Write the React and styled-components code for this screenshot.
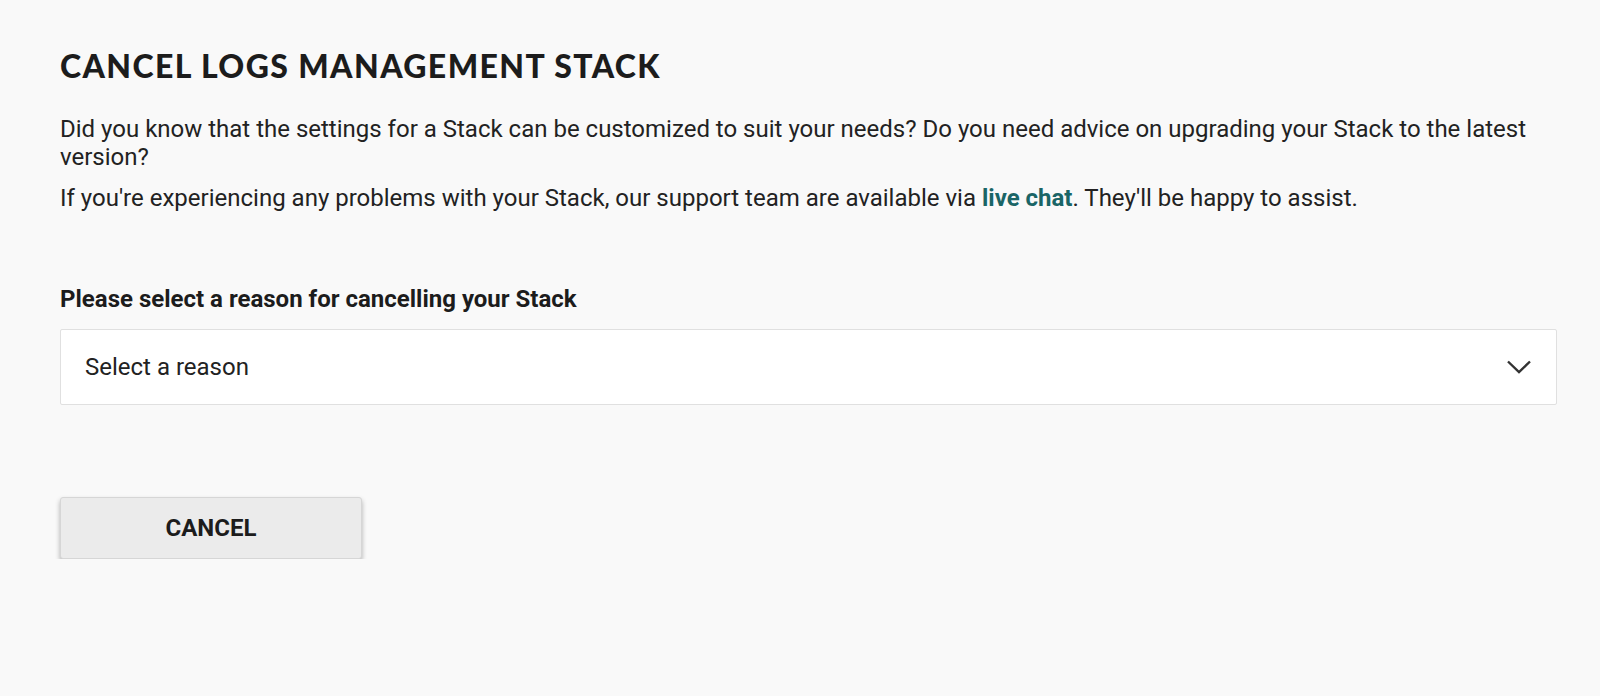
import styled, {createGlobalStyle} from 'styled-components'

const GlobalStyle = createGlobalStyle`
  body {
    margin: 0;
    background: #f9f9f9;
    font-family: Roboto, "Liberation Sans", sans-serif;
    color: #222;
  }
`

const Page = styled.main`
  padding: 46px 43px 0 60px;
`

const Title = styled.h1`
  margin: 0 0 30px;
  font-family: Lato, "Noto Sans", sans-serif;
  font-weight: 900;
  font-size: 32px;
  letter-spacing: 1.4px;
  color: #1c1c1c;
`

const Text = styled.p`
  margin: 0 0 13px;
  font-size: 24px;
  line-height: 28px;
  color: #222;
`

const ChatLink = styled.a`
  color: #1a6566;
  font-weight: 700;
  text-decoration: none;
`

const Field = styled.div`
  margin-top: 73px;
  display: flex;
  flex-direction: column;
  gap: 16px;
`

const Label = styled.label`
  font-size: 24px;
  font-weight: 700;
  color: #1c1c1c;
`

const SelectBox = styled.div`
  height: 74px;
  display: flex;
  align-items: center;
  justify-content: space-between;
  padding: 0 24px;
  background: #fff;
  border: 1px solid #e0e0e0;
  border-radius: 2px;
  font-size: 24px;
  color: #222;
`

const Chevron = () => (
  <svg width="26" height="16" viewBox="0 0 26 16" fill="none">
    <path d="M2 2.5 L13 13 L24 2.5" stroke="#333" strokeWidth="2.4" />
  </svg>
)

const Button = styled.button`
  margin-top: 92px;
  width: 302px;
  height: 62px;
  background: #ebebeb;
  border: 1px solid #d6d6d6;
  border-radius: 3px;
  box-shadow: 0 3px 5px rgba(0, 0, 0, 0.3);
  font-family: Roboto, "Liberation Sans", sans-serif;
  font-size: 24px;
  font-weight: 700;
  color: #1c1c1c;
  cursor: pointer;
`

const App = () => {
  return (
    <Page>
      <GlobalStyle/>
      <Title>CANCEL LOGS MANAGEMENT STACK</Title>
      <Text>
        Did you know that the settings for a Stack can be customized to suit your needs? Do you need advice on upgrading your Stack to the latest version?
      </Text>
      <Text>
        If you're experiencing any problems with your Stack, our support team are available via <ChatLink href="#">live chat</ChatLink>. They'll be happy to assist.
      </Text>

      <Field>
        <Label>Please select a reason for cancelling your Stack</Label>
        <SelectBox>
          <span>Select a reason</span>
          <Chevron/>
        </SelectBox>
      </Field>

      <Button>CANCEL</Button>
    </Page>
  )
}

export default App
